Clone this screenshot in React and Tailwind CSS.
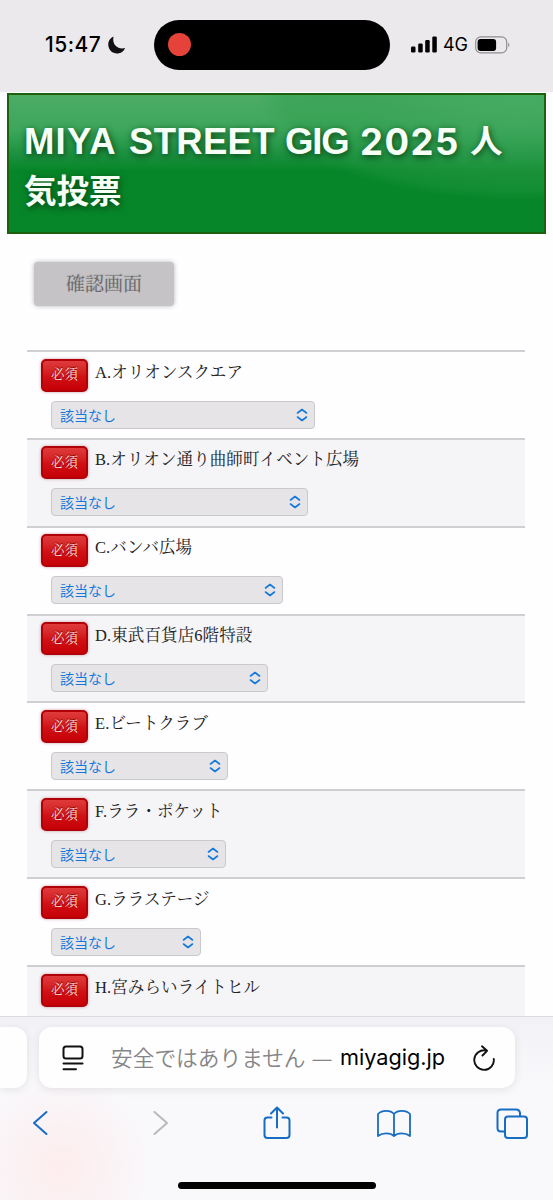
import React from 'react'

const stages = [
  { name: 'A.オリオンスクエア', select: 'w-[264px]' },
  { name: 'B.オリオン通り曲師町イベント広場', select: 'w-[257px]' },
  { name: 'C.バンバ広場', select: 'w-[232px]' },
  { name: 'D.東武百貨店6階特設', select: 'w-[217px]' },
  { name: 'E.ビートクラブ', select: 'w-[177px]' },
  { name: 'F.ララ・ポケット', select: 'w-[175px]' },
  { name: 'G.ララステージ', select: 'w-[150px]' },
  { name: 'H.宮みらいライトヒル' },
]

function StatusBar() {
  return (
    <div className="flex items-center shrink-0 h-[92px] pb-[3px] bg-[#ebe9ec] font-['Inter','Liberation_Sans',sans-serif] text-black">
      <div className="flex items-center w-[154px] pl-[45px] gap-[5px]">
        <span className="text-[21px] leading-none font-medium tracking-[0.5px] w-[57px] whitespace-nowrap">15:47</span>
        <svg width="19" height="20" viewBox="0 0 19 20" className="blur-[0.5px]">
          <path d="M6.5 1.5C3 3 1 6.500 1.300 10.300C1.700 15.200 5.500 18.500 10 18.500C13.700 18.500 17 16.300 18 13C13 14.800 4.500 11.500 6.500 1.500Z" fill="#111" />
        </svg>
      </div>
      <div className="flex items-center w-[236px] h-[50px] pl-[14px] rounded-full bg-black">
        <div className="w-[23px] h-[23px] rounded-full bg-[#e5433a]" />
      </div>
      <div className="flex items-center pl-[21px]">
        <svg width="26" height="17" viewBox="0 0 26 17">
          <rect x="0" y="10.500" width="4.500" height="6" rx="1.200" />
          <rect x="7.200" y="7.500" width="4.500" height="9" rx="1.200" />
          <rect x="14.200" y="4" width="4.500" height="12.500" rx="1.200" />
          <rect x="21.300" y="0.500" width="4.500" height="16" rx="1.200" />
        </svg>
        <span className="pl-[6px] w-[38px] text-[18px] leading-none tracking-[-0.1px]">4G</span>
        <svg width="36" height="18" viewBox="0 0 36 18">
          <rect x="0.700" y="0.900" width="31" height="16" rx="5" fill="none" stroke="#8f8e91" strokeWidth="1.200" />
          <rect x="2.600" y="2.900" width="18.500" height="12" rx="3" />
          <path d="M33.200 6.500Q35.600 8.900 33.200 11.300Z" fill="#8f8e91" />
        </svg>
      </div>
    </div>
  )
}

function Required() {
  return (
    <div className="flex items-center justify-center shrink-0 w-[47px] h-[33px] rounded-[5px] border-2 border-[#b20008] bg-linear-to-b from-[#df3a3c] via-[#cf1014] via-55% to-[#c60006] shadow-[0_0_3px_rgba(150,60,60,0.5)] text-[13.500px] leading-none text-[#ffd9d4] [text-shadow:0_-1px_1px_#7d0000]">
      必須
    </div>
  )
}

function StageRow({ name, select, shaded }) {
  return (
    <div className={`shrink-0 h-[87.860px] border-t-2 border-[#cfced2] pl-[14px] pt-[6.500px] ${shaded ? 'bg-[#f5f4f7]' : ''}`}>
      <div className="flex items-start gap-[7px]">
        <Required />
        <span className="pt-[3px] text-[16.500px] leading-[22px] tracking-[0.1px] text-[#222] whitespace-nowrap">{name}</span>
      </div>
      {select && (
        <div className={`flex items-center justify-between h-[28px] mt-[9px] ml-[10px] pl-[8px] pr-[6px] rounded-[4px] border-[1.500px] border-[#c9c8cb] bg-[#e6e4e7] ${select}`}>
          <span className="font-['Noto_Sans_CJK_JP',sans-serif] text-[14px] leading-none text-[#1479dc]">該当なし</span>
          <svg width="12" height="14" viewBox="0 0 12 14" fill="none" stroke="#1479dc" strokeWidth="1.600" strokeLinecap="round" strokeLinejoin="round">
            <path d="M1.500 5L6 1.500L10.500 5M1.500 9L6 12.500L10.500 9" />
          </svg>
        </div>
      )}
    </div>
  )
}

function Toolbar() {
  return (
    <div className="flex items-start h-[60px] pl-[31px] text-[#176cc4]">
      <svg width="18" height="28" viewBox="0 0 18 28" className="mt-[8px]" fill="none" stroke="currentColor" strokeWidth="2" strokeLinecap="round" strokeLinejoin="round">
        <path d="M15.500 3L3 14L15.500 25" />
      </svg>
      <svg width="18" height="28" viewBox="0 0 18 28" className="mt-[8px] ml-[103px]" fill="none" stroke="#b9b8bc" strokeWidth="2" strokeLinecap="round" strokeLinejoin="round">
        <path d="M2.500 3L15 14L2.500 25" />
      </svg>
      <svg width="30" height="36" viewBox="0 0 30 36" className="mt-[4px] ml-[92px]" fill="none" stroke="currentColor" strokeWidth="2" strokeLinecap="round" strokeLinejoin="round">
        <path d="M9.500 12.500H5.500Q2.500 12.500 2.500 15.500V30Q2.500 33 5.500 33H24.500Q27.500 33 27.500 30V15.500Q27.500 12.500 24.500 12.500H20.500M15 22.500V3M9 8.500L15 2.500L21 8.500" />
      </svg>
      <svg width="36" height="30" viewBox="0 0 36 30" className="mt-[8px] ml-[84px]" fill="none" stroke="currentColor" strokeWidth="1.800" strokeLinecap="round" strokeLinejoin="round">
        <path d="M18 5C14.500 0.800 6 0.800 2 5V27C6.500 23.500 14.500 23.500 18 27C21.500 23.500 29.500 23.500 34 27V5C30 0.800 21.500 0.800 18 5V27" />
      </svg>
      <svg width="32" height="32" viewBox="0 0 32 32" className="mt-[7px] ml-[84px]" fill="none" stroke="currentColor" strokeWidth="2" strokeLinejoin="round">
        <rect x="9" y="8.500" width="22" height="21.500" rx="3" />
        <path d="M8.500 23.500H5Q1.500 23.500 1.500 20V5Q1.500 1.500 5 1.500H20Q23.500 1.500 24 5V8" />
      </svg>
    </div>
  )
}

function BrowserBar() {
  return (
    <div className="flex flex-col shrink-0 h-[184px] border-t border-[#dcdbe1] bg-[#f9f8fb] bg-[radial-gradient(ellipse_90px_90px_at_60px_150px,#fdeced,transparent)]">
      <div className="flex gap-[12px] pt-[10px] bg-linear-to-b from-[#f2f1f5] to-transparent">
        <div className="w-[27px] h-[61px] rounded-r-[13px] bg-[#fffeff] shadow-[0_2px_10px_rgba(0,0,0,0.09)]" />
        <div className="flex items-center w-[476px] h-[61px] pl-[23px] pr-[19px] rounded-[13px] bg-[#fffeff] shadow-[0_2px_10px_rgba(0,0,0,0.09)]">
          <svg width="22" height="26" viewBox="0 0 22 26" fill="none" stroke="#111" strokeWidth="2" strokeLinecap="round">
            <rect x="1.500" y="1.500" width="19" height="12" rx="2.500" />
            <path d="M1.500 18.500H20.500M1.500 24.300H14" />
          </svg>
          <div className="flex items-center flex-1 pl-[27px] whitespace-nowrap leading-none">
            <span className="w-[229px] font-['Noto_Sans_CJK_JP',sans-serif] text-[21.700px] text-[#858487] font-[350]">安全ではありません <span className="inline-block pl-[2px] font-['Inter',sans-serif] text-[19px]">—</span></span>
            <span className="font-['Inter','Liberation_Sans',sans-serif] text-[21.700px] text-black">miyagig.jp</span>
          </div>
          <svg width="24" height="26" viewBox="0 0 24 26" fill="none" stroke="#111" strokeWidth="1.900" strokeLinecap="round" strokeLinejoin="round">
            <path d="M14 5.500A9.800 9.800 0 1 0 21.800 14M10 1.300L15 5.800L10.500 10.500" />
          </svg>
        </div>
      </div>
      <div className="pt-[13px]">
        <Toolbar />
      </div>
      <div className="w-[198px] h-[7px] mt-[21px] mx-auto rounded-full bg-black" />
    </div>
  )
}

export default function App() {
  return (
    <div className="flex flex-col w-[553px] h-[1200px] overflow-hidden bg-[#fefdff] font-['Liberation_Serif','Noto_Serif_CJK_JP','Noto_Sans_CJK_JP',serif]">
      <StatusBar />
      <main className="flex flex-col flex-1 min-h-0 overflow-hidden">
        <h1 className="shrink-0 w-[539px] h-[141px] mt-[1px] ml-[7px] pl-[15px] pt-[22px] border-[2.500px] border-[#1d610f] bg-[#078629] bg-[radial-gradient(ellipse_260px_105px_at_510px_0px,rgba(70,172,98,0.75)_0%,rgba(50,160,80,0.55)_60%,rgba(40,155,70,0.35)_90%,transparent_100%),linear-gradient(180deg,#4dab66_0%,#3da75c_25%,#198f3d_45%,#078629_55%)] font-['Liberation_Sans','Noto_Sans_CJK_JP',sans-serif] text-[36.500px] leading-[50px] font-bold text-[#f6fff5] [text-shadow:1px_2px_7px_#063f12]">
          <span className="flex whitespace-pre">
            <span className="w-[105px] tracking-[1.200px]">MIYA </span>
            <span className="w-[156px] tracking-[0.300px]">STREET </span>
            <span className="w-[75px] tracking-[-1.200px]">GIG </span>
            <span className="w-[110px] tracking-[1.500px] font-['Inter',sans-serif]">2025 </span>
            <span className="text-[32.500px]">人</span>
          </span>
          <span className="block text-[32.500px]">気投票</span>
        </h1>
        <button type="button" className="shrink-0 w-[140px] h-[44px] mt-[28px] ml-[34px] rounded-[4px] bg-[#c5c3c6] shadow-[0_0_5px_rgba(0,0,0,0.28)] text-[19px] leading-none text-[#6a686b] [text-shadow:0_-1px_1px_#aaa]">
          確認画面
        </button>
        <div className="flex flex-col mt-[44px] ml-[27px] w-[498px]">
          {stages.map((stage, i) => (
            <StageRow key={stage.name} name={stage.name} select={stage.select} shaded={i % 2 === 1} />
          ))}
        </div>
      </main>
      <BrowserBar />
    </div>
  )
}
